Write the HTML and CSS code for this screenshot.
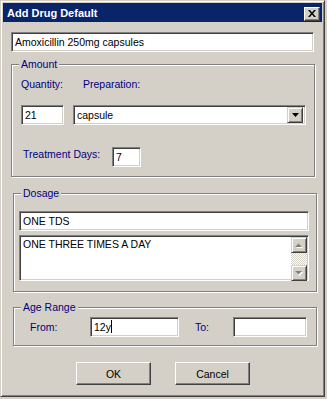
FILE: index.html
```html
<!DOCTYPE html>
<html>
<head>
<meta charset="utf-8">
<link rel="stylesheet" href="styles.css">
</head>
<body>
<div class="window">
  <div class="caption">
    <span class="title">Add Drug Default</span>
    <span class="close-btn"><svg width="8" height="7" viewBox="0 0 8 7"><path d="M0 0h2l2 2.5L6 0h2L5 3.5 8 7H6L4 4.5 2 7H0l3-3.5z" fill="#000"/></svg></span>
  </div>
  <div class="content">
    <div class="field drug">Amoxicillin 250mg capsules</div>

    <div class="group amount">
      <span class="legend">Amount</span>
      <div class="label-row">
        <span class="lbl qty-lbl">Quantity:</span>
        <span class="lbl prep-lbl">Preparation:</span>
      </div>
      <div class="input-row">
        <div class="field qty">21</div>
        <div class="field combo">
          <span class="combo-text">capsule</span>
          <span class="dd-btn"><svg width="7" height="4" viewBox="0 0 7 4"><path d="M0 0h7L3.5 4z" fill="#000"/></svg></span>
        </div>
      </div>
      <div class="days-row">
        <span class="lbl days-lbl">Treatment Days:</span>
        <div class="field days">7</div>
      </div>
    </div>

    <div class="group dosage">
      <span class="legend">Dosage</span>
      <div class="field dose">ONE TDS</div>
      <div class="field memo">
        <span class="memo-text">ONE THREE TIMES A DAY</span>
        <div class="scrollbar">
          <span class="sb-btn"><svg width="8" height="5" viewBox="0 0 8 5"><path d="M1 5h7L4.5 1.5z" fill="#fff"/><path d="M0 4h7L3.5 0.5z" fill="#808080"/></svg></span>
          <span class="sb-track"></span>
          <span class="sb-btn"><svg width="8" height="5" viewBox="0 0 8 5"><path d="M1 1h7L4.5 5z" fill="#fff"/><path d="M0 0h7L3.5 3.5z" fill="#808080"/></svg></span>
        </div>
      </div>
    </div>

    <div class="group age">
      <span class="legend">Age Range</span>
      <div class="age-row">
        <span class="lbl from-lbl">From:</span>
        <div class="field from">12y<span class="caret"></span></div>
        <span class="lbl to-lbl">To:</span>
        <div class="field to"></div>
      </div>
    </div>

    <div class="buttons">
      <span class="btn">OK</span>
      <span class="btn">Cancel</span>
    </div>
  </div>
</div>
</body>
</html>
```
FILE: styles.css
```css
html, body {
  margin: 0;
  padding: 0;
}
body {
  background: #d4d0c8;
  font-family: "Liberation Sans", Arial, sans-serif;
  font-size: 10.5px;
  color: #000;
}
.window {
  width: 325px;
  height: 397px;
  box-sizing: border-box;
  background: #d4d0c8;
  border: 1px solid;
  border-color: #d4d0c8 #404040 #404040 #d4d0c8;
  box-shadow: inset 1px 1px #fff, inset -1px -1px #808080;
  padding: 2px;
  display: flex;
  flex-direction: column;
}
.caption {
  height: 19px;
  background: #0a246a;
  display: flex;
  align-items: center;
  justify-content: space-between;
  padding-left: 4px;
  padding-right: 2px;
}
.title {
  color: #fff;
  font-weight: bold;
  font-size: 11px;
}
.close-btn {
  width: 16px;
  height: 14px;
  box-sizing: border-box;
  background: #d4d0c8;
  border: 1px solid;
  border-color: #fff #404040 #404040 #fff;
  box-shadow: inset -1px -1px #808080;
  display: flex;
  align-items: center;
  justify-content: center;
  padding-right: 1px;
  margin-top: 2px;
}
.close-btn svg { display: block; }

.content {
  padding-left: 8px;
  display: flex;
  flex-direction: column;
  align-items: flex-start;
}
.field {
  background: #fff;
  box-sizing: border-box;
  border: 1px solid;
  border-color: #808080 #fff #fff #808080;
  box-shadow: inset 1px 1px #404040, inset -1px -1px #d4d0c8;
  height: 20px;
  line-height: 18px;
  padding: 0 3px;
  white-space: nowrap;
}
.drug {
  margin-top: 10px;
  width: 303px;
}
.lbl {
  color: #000080;
  line-height: 13px;
}
.group {
  position: relative;
  box-sizing: border-box;
  border: 1px solid #808080;
  box-shadow: inset 1px 1px #fff, 1px 1px #fff;
  width: 304px;
}
.legend {
  position: absolute;
  top: -7px;
  left: 7px;
  padding: 0 2px;
  background: #d4d0c8;
  color: #000080;
  line-height: 13px;
}
.amount {
  margin-top: 12px;
  padding: 13px 0 9px 9px;
}
.label-row {
  display: flex;
}
.qty-lbl { width: 62px; }
.input-row {
  display: flex;
  margin-top: 14px;
  gap: 9px;
}
.qty { width: 43px; }
.combo {
  width: 233px;
  display: flex;
  align-items: center;
  justify-content: space-between;
  padding-right: 2px;
}
.dd-btn {
  width: 16px;
  height: 16px;
  box-sizing: border-box;
  background: #d4d0c8;
  border: 1px solid;
  border-color: #d4d0c8 #404040 #404040 #d4d0c8;
  box-shadow: inset 1px 1px #fff, inset -1px -1px #808080;
  display: flex;
  align-items: center;
  justify-content: center;
}
.dd-btn svg { display: block; }
.days-row {
  display: flex;
  align-items: flex-start;
  margin-top: 22px;
  padding-left: 2px;
}
.days-lbl {
  margin-top: 1px;
  width: 89px;
}
.days { width: 29px; }

.dosage {
  margin-top: 16px;
  margin-left: 2px;
  padding: 17px 0 10px 5px;
}
.dose { width: 290px; }
.memo {
  margin-top: 4px;
  width: 290px;
  height: 46px;
  display: flex;
  justify-content: space-between;
  align-items: flex-start;
  padding: 0 0 0 3px;
  line-height: 17px;
}
.scrollbar {
  width: 16px;
  height: 44px;
  display: flex;
  flex-direction: column;
  margin-top: 1px;
  margin-right: 1px;
}
.sb-btn {
  width: 16px;
  height: 16px;
  box-sizing: border-box;
  background: #d4d0c8;
  border: 1px solid;
  border-color: #d4d0c8 #404040 #404040 #d4d0c8;
  box-shadow: inset 1px 1px #fff, inset -1px -1px #808080;
  display: flex;
  align-items: center;
  justify-content: center;
}
.sb-btn svg { display: block; }
.sb-track {
  flex: 1;
  background: repeating-conic-gradient(#fff 0 25%, #d4d0c8 0 50%) 0 0 / 2px 2px;
}

.age {
  margin-top: 15px;
  margin-left: 2px;
  padding: 9px 0 8px 0;
}
.age-row {
  display: flex;
  align-items: center;
}
.from-lbl { margin-left: 16px; width: 60px; }
.from { width: 89px; }
.caret {
  display: inline-block;
  width: 1px;
  height: 13px;
  background: #000;
  vertical-align: -2px;
}
.to-lbl { margin-left: 16px; width: 38px; }
.to { width: 74px; }

.buttons {
  display: flex;
  gap: 24px;
  margin-top: 16px;
  margin-left: 65px;
}
.btn {
  width: 75px;
  height: 23px;
  box-sizing: border-box;
  background: #d4d0c8;
  border: 1px solid;
  border-color: #fff #404040 #404040 #fff;
  box-shadow: inset -1px -1px #808080;
  display: flex;
  align-items: center;
  justify-content: center;
}
```
